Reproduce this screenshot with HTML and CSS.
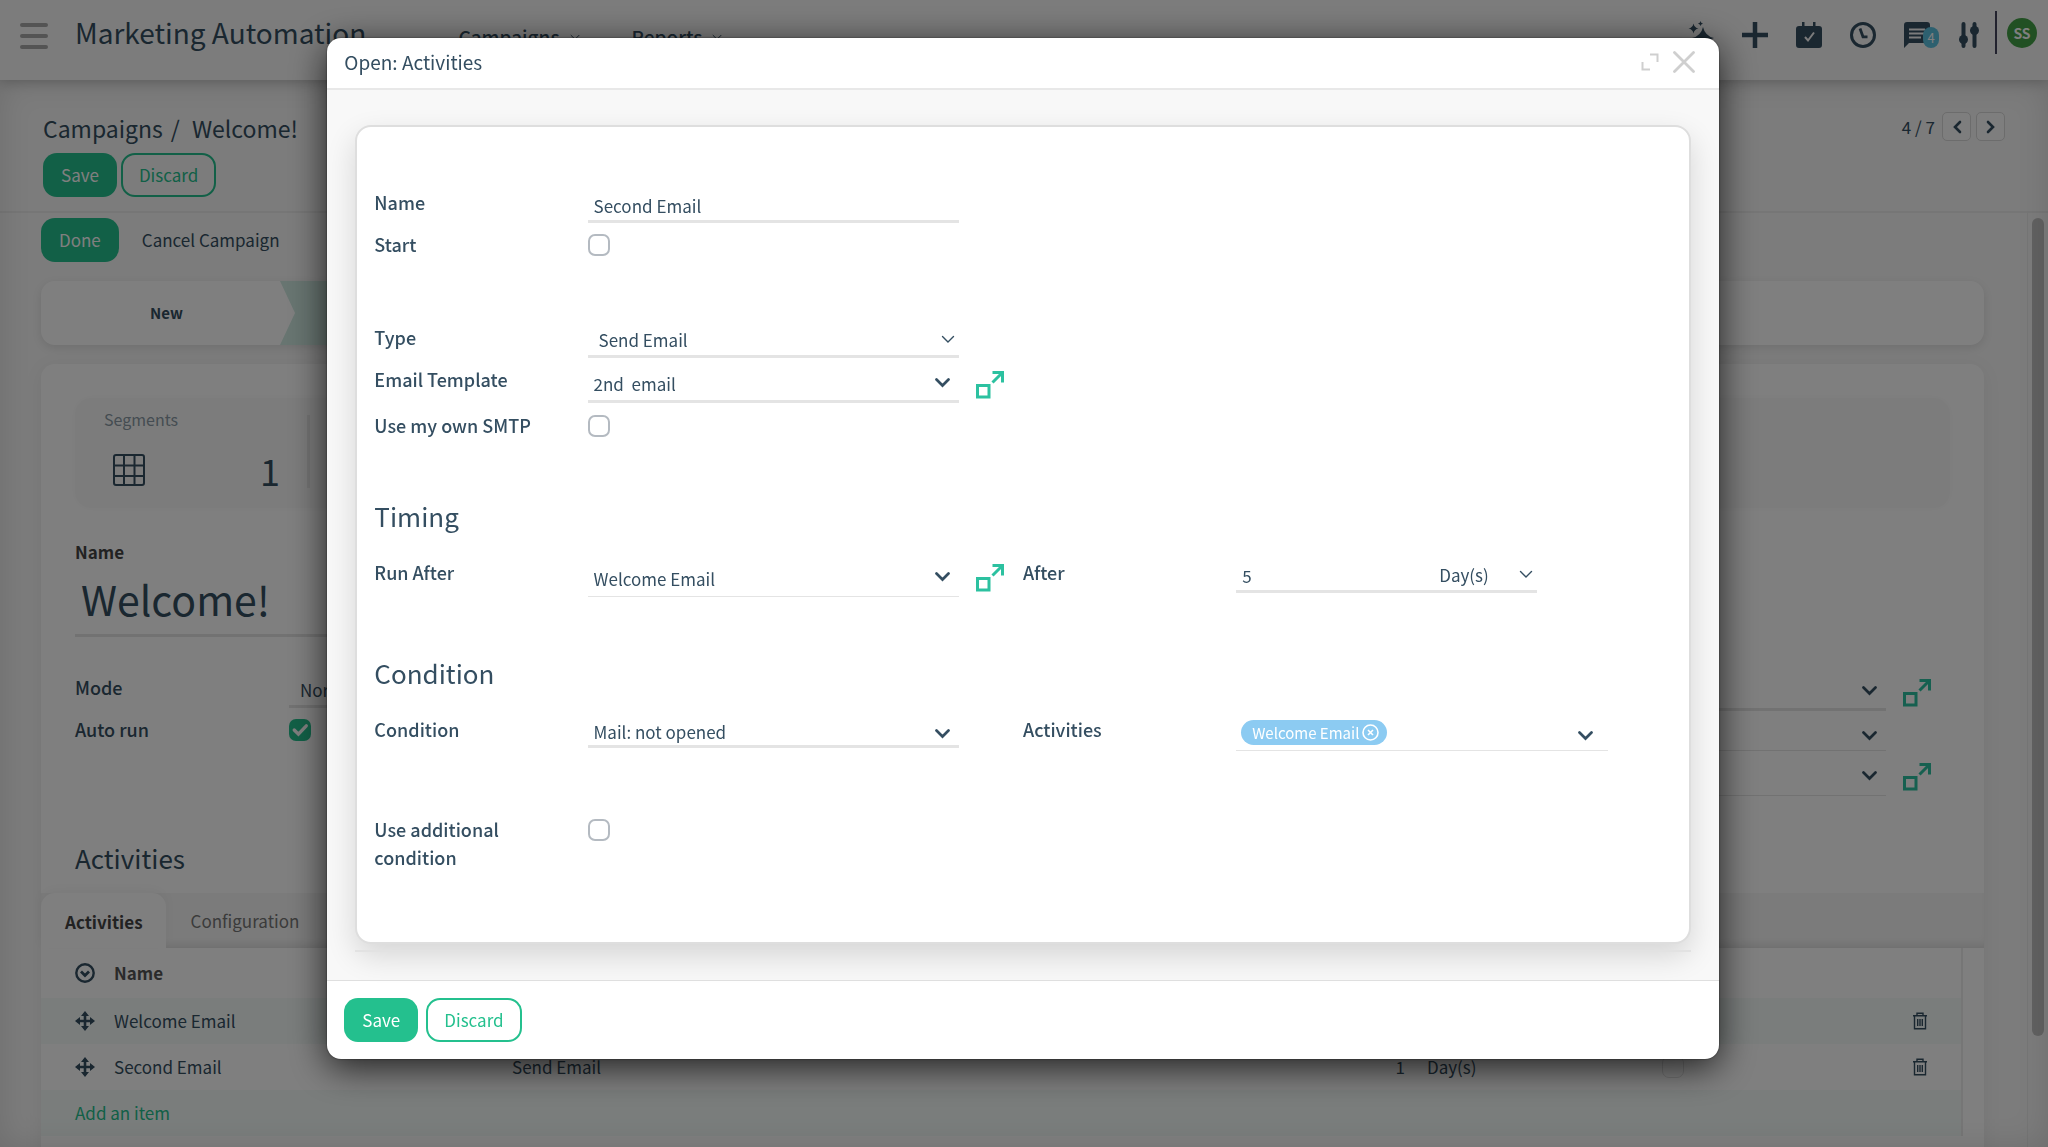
FILE: index.html
```html
<!DOCTYPE html>
<html lang="en">
<head>
<meta charset="utf-8">
<title>Marketing Automation</title>
<link rel="stylesheet" href="styles.css">
</head>
<body>
<svg class="sprite" aria-hidden="true">
  <symbol id="chev" viewBox="0 0 15 10"><path d="M1.500 1.500 7.500 7.500l6-6" fill="none" stroke="currentColor" stroke-width="2.700" stroke-linecap="round"/></symbol>
  <symbol id="chev-thin" viewBox="0 0 14 9"><path d="M1.500 1.500 7 7l5.500-5.500" fill="none" stroke="currentColor" stroke-width="1.400" stroke-linecap="round"/></symbol>
  <symbol id="open" viewBox="0 0 28 28"><path d="M1.500 14.500h11.500v11.500H1.500zM16.500 11.500 26 2M16.500 1.500h10v10" fill="none" stroke="currentColor" stroke-width="3"/></symbol>
  <symbol id="move" viewBox="0 0 20 20"><path d="M10 2v16M2 10h16" stroke="currentColor" stroke-width="2.600"/><path d="M10 0l4 5H6zM10 20l4-5H6zM0 10l5-4v8zM20 10l-5-4v8z" fill="currentColor"/></symbol>
  <symbol id="trash" viewBox="0 0 16 18"><path d="M1 3.700h14M5 3.500V1.300h6v2.200M2.500 4v12.800h11V4M5.700 7v7M8 7v7M10.300 7v7" fill="none" stroke="currentColor" stroke-width="1.400"/></symbol>
</svg>

<div class="app">
  <header class="topbar">
    <button class="burger" aria-label="Menu"><span></span><span></span><span></span></button>
    <h1 class="brand">Marketing Automation</h1>
    <nav class="menu">
      <a href="#">Campaigns <svg width="10" height="7"><use href="#chev-thin"/></svg></a>
      <a href="#">Reports <svg width="10" height="7"><use href="#chev-thin"/></svg></a>
    </nav>
    <div class="tools">
      <button aria-label="Assistant"><svg width="26" height="27" viewBox="0 0 26 27" fill="currentColor"><path d="M15 6q2 9 11 11-9 2-11 10-2-8-11-10 9-2 11-11zM5.500 2.500q.8 4.200 5 5-4.200.8-5 5-.8-4.200-5-5 4.200-.8 5-5zM12.500 0q.3 2 2.500 2.500-2.200.500-2.500 2.500-.3-2-2.500-2.500 2.200-.500 2.500-2.500z"/></svg></button>
      <button aria-label="Add"><svg width="26" height="26" viewBox="0 0 26 26"><path d="M13 0v26M0 13h26" stroke="currentColor" stroke-width="4.500"/></svg></button>
      <button aria-label="Calendar"><svg width="26" height="26" viewBox="0 0 26 26"><path d="M3 4h20a3 3 0 0 1 3 3v16a3 3 0 0 1-3 3H3a3 3 0 0 1-3-3V7a3 3 0 0 1 3-3zM6 0h2.500v6H6zM17 0h2.500v6H17z" fill="currentColor"/><path d="M9 15l3 3.500 6-8" fill="none" stroke="#f8f8f8" stroke-width="2"/></svg></button>
      <button aria-label="Activity clock"><svg width="26" height="26" viewBox="0 0 26 26" fill="none" stroke="currentColor"><circle cx="13" cy="13" r="11.500" stroke-width="3"/><path d="M10 6.500l3 8.300h4.500" stroke-width="2.800"/></svg></button>
      <button class="chat" aria-label="Messages"><svg width="26" height="26" viewBox="0 0 26 26"><path d="M3 0h20a3 3 0 0 1 3 3v15a3 3 0 0 1-3 3H5l-5 5V3a3 3 0 0 1 3-3z" fill="currentColor"/><path d="M5 7.500h16M5 11.500h16M5 15.500h12" stroke="#f8f8f8" stroke-width="1.800"/></svg><span class="badge">4</span></button>
      <button aria-label="Settings"><svg width="20" height="26" viewBox="0 0 20 26"><path d="M4.500 2v22M15.500 2v22" stroke="currentColor" stroke-width="4" stroke-linecap="round"/><circle cx="4.500" cy="17.500" r="4.500" fill="currentColor"/><circle cx="15.500" cy="8.500" r="4.500" fill="currentColor"/></svg></button>
    </div>
    <span class="rule"></span>
    <span class="avatar">SS</span>
  </header>

  <div class="page">
    <div class="control">
      <div>
        <div class="crumbs"><a href="#">Campaigns</a><span>/</span><span>Welcome!</span></div>
        <div class="actions"><button class="btn primary">Save</button><button class="btn outline">Discard</button></div>
      </div>
      <div class="pager">
        <span>4 / 7</span>
        <button aria-label="Previous"><svg width="10" height="14" viewBox="0 0 10 14"><path d="M8 2 3 7l5 5" fill="none" stroke="currentColor" stroke-width="2.600" stroke-linecap="round"/></svg></button>
        <button aria-label="Next"><svg width="10" height="14" viewBox="0 0 10 14"><path d="M2 2l5 5-5 5" fill="none" stroke="currentColor" stroke-width="2.600" stroke-linecap="round"/></svg></button>
      </div>
    </div>

    <div class="scroller">
      <main class="content">
        <div class="statusbar"><button class="btn primary">Done</button><button class="btn plain">Cancel Campaign</button></div>
        <div class="steps">
          <span class="step">New</span>
          <svg class="step-tip" width="15" height="64" viewBox="0 0 15 64"><path d="M0 0h15v64H0l15-32z" fill="currentColor"/></svg>
          <span class="step current"></span>
        </div>
        <section class="sheet">
          <div class="sheet-body">
            <div class="stats">
              <div class="stat">
                <span class="stat-name">Segments</span>
                <div class="stat-row">
                  <svg width="32" height="32" viewBox="0 0 32 32" fill="none" stroke="currentColor" stroke-width="2"><rect x="1" y="1" width="30" height="30" rx="2"/><path d="M11 1v30M21.500 1v30M1 11.500h30M1 22h30"/></svg>
                  <span class="stat-value">1</span>
                </div>
              </div>
            </div>
            <div class="title-field">
              <label for="campaign">Name</label>
              <input id="campaign" value="Welcome!">
            </div>
            <div class="columns wide">
              <div>
                <div class="row"><label for="mode">Mode</label><div class="field"><select id="mode" class="sel"><option>Normal</option></select></div></div>
                <div class="row"><label for="auto">Auto run</label><input id="auto" type="checkbox" class="check" checked></div>
              </div>
              <div>
                <div class="row"><span></span><div class="field mid"><button class="drop" aria-label="Show options"><svg width="15" height="10"><use href="#chev"/></svg></button></div><button class="ext" aria-label="Open record"><svg width="28" height="28"><use href="#open"/></svg></button></div>
                <div class="row"><span></span><div class="field thin low"><button class="drop" aria-label="Show options"><svg width="15" height="10"><use href="#chev"/></svg></button></div></div>
                <div class="row"><span></span><div class="field tall"><button class="drop" aria-label="Show options"><svg width="15" height="10"><use href="#chev"/></svg></button></div><button class="ext" aria-label="Open record"><svg width="28" height="28"><use href="#open"/></svg></button></div>
              </div>
            </div>
            <h2 class="heading">Activities</h2>
          </div>
          <div class="tabs"><a href="#" class="tab active">Activities</a><a href="#" class="tab">Configuration</a></div>
          <div class="table-wrap">
            <table class="list">
              <colgroup><col class="c-handle"><col class="c-name"><col class="c-action"><col class="c-count"><col class="c-unit"><col class="c-start"><col class="c-del"></colgroup>
              <thead><tr><th class="handle"><svg width="20" height="20" viewBox="0 0 20 20" fill="none" stroke="currentColor" stroke-width="2.400"><circle cx="10" cy="10" r="8.700"/><path d="M6 8.500l4 4 4-4" stroke-width="2.800"/></svg></th><th>Name</th><th></th><th></th><th></th><th></th><th></th></tr></thead>
              <tbody>
                <tr class="tint"><td class="handle"><svg width="20" height="20"><use href="#move"/></svg></td><td>Welcome Email</td><td></td><td></td><td></td><td></td><td class="del"><button aria-label="Delete"><svg width="16" height="18"><use href="#trash"/></svg></button></td></tr>
                <tr><td class="handle"><svg width="20" height="20"><use href="#move"/></svg></td><td>Second Email</td><td>Send Email</td><td class="num">1</td><td class="unit">Day(s)</td><td><input type="checkbox" class="check faint" aria-label="Start" disabled></td><td class="del"><button aria-label="Delete"><svg width="16" height="18"><use href="#trash"/></svg></button></td></tr>
                <tr class="tint"><td class="add" colspan="7"><a href="#">Add an item</a></td></tr>
              </tbody>
            </table>
          </div>
        </section>
      </main>
      <div class="track"><div class="thumb"></div></div>
    </div>
  </div>
</div>

<div class="overlay">
  <div class="modal" role="dialog" aria-labelledby="dlg">
    <header class="modal-head">
      <h2 id="dlg">Open: Activities</h2>
      <div class="modal-tools">
        <button aria-label="Expand"><svg width="18" height="18" viewBox="0 0 18 18"><path d="M9 1.500h7.500V9M1.500 9v7.500H9" fill="none" stroke="currentColor" stroke-width="2"/></svg></button>
        <button aria-label="Close"><svg width="22" height="22" viewBox="0 0 22 22"><path d="M1.500 1.500l19 19M20.500 1.500l-19 19" stroke="currentColor" stroke-width="2.800" stroke-linecap="round"/></svg></button>
      </div>
    </header>
    <div class="modal-body">
      <form class="card">
        <div class="columns">
          <div>
            <div class="row"><label for="name">Name</label><div class="field"><input id="name" value="Second Email"></div></div>
            <div class="row"><label for="start">Start</label><input id="start" type="checkbox" class="check"></div>
          </div>
        </div>
        <div class="columns type-group">
          <div>
            <div class="row"><label for="type">Type</label><div class="field stack"><select id="type" class="sel"><option>Send Email</option></select><svg width="14" height="9"><use href="#chev-thin"/></svg></div></div>
            <div class="row tall-row"><label for="tpl">Email Template</label><div class="field mid"><input id="tpl" value="2nd  email"><button type="button" class="drop" aria-label="Show options"><svg width="15" height="10"><use href="#chev"/></svg></button></div><button type="button" class="ext" aria-label="Open record"><svg width="28" height="28"><use href="#open"/></svg></button></div>
            <div class="row tall-row"><label for="smtp">Use my own SMTP</label><input id="smtp" type="checkbox" class="check"></div>
          </div>
        </div>
        <h3 class="heading">Timing</h3>
        <div class="columns">
          <div class="row"><label for="run">Run After</label><div class="field tall"><input id="run" value="Welcome Email"><button type="button" class="drop" aria-label="Show options"><svg width="15" height="10"><use href="#chev"/></svg></button></div><button type="button" class="ext" aria-label="Open record"><svg width="28" height="28"><use href="#open"/></svg></button></div>
          <div class="row"><label for="after">After</label><div class="field delay"><input id="after" value="5"><div class="stack"><select class="sel unit-sel" aria-label="Unit"><option>Day(s)</option></select><svg width="14" height="9"><use href="#chev-thin"/></svg></div></div></div>
        </div>
        <h3 class="heading condition-heading">Condition</h3>
        <div class="columns">
          <div class="row"><label for="cond">Condition</label><div class="field short low"><input id="cond" value="Mail: not opened"><button type="button" class="drop" aria-label="Show options"><svg width="15" height="10"><use href="#chev"/></svg></button></div></div>
          <div class="row"><label for="acts">Activities</label><div class="field thin low tags"><span class="chip">Welcome Email<button type="button" aria-label="Remove"><svg width="17" height="17" viewBox="0 0 17 17" fill="none" stroke="currentColor" stroke-width="1.600"><circle cx="8.500" cy="8.500" r="7.500"/><path d="M6 6l5 5M11 6l-5 5"/></svg></button></span><input id="acts"><button type="button" class="drop" aria-label="Show options"><svg width="15" height="10"><use href="#chev"/></svg></button></div></div>
        </div>
        <div class="columns extra-group">
          <div class="row"><label for="extra">Use additional condition</label><input id="extra" type="checkbox" class="check"></div>
        </div>
      </form>
      <hr>
    </div>
    <footer class="modal-foot"><button class="btn primary">Save</button><button class="btn outline">Discard</button></footer>
  </div>
</div>
</body>
</html>
```
FILE: styles.css
```css
:root {
  --ink: #344e61;
  --green: #24c08e;
  --line: #e4e4e4;
}
* { box-sizing: border-box; }
body {
  margin: 0;
  color: var(--ink);
  font: 400 17px/28px "Noto Sans CJK SC", "Noto Sans", sans-serif;
  background: #f8f8f8;
}
button, input, select { font: inherit; color: inherit; margin: 0; padding: 0; border: 0; background: none; outline: 0; }
a { color: inherit; text-decoration: none; }
h1, h2, h3 { margin: 0; font-weight: 400; }
svg { display: block; flex: none; }
.sprite { position: absolute; width: 0; height: 0; }

.app { height: 100vh; overflow: hidden; display: flex; flex-direction: column; }

.topbar {
  flex: none;
  display: flex;
  align-items: flex-start;
  height: 80px;
  padding: 0 11px 0 20px;
  background: #f9f9f9;
  box-shadow: 0 2px 12px rgba(0, 0, 0, .2);
  z-index: 1;
}
.burger { display: grid; gap: 7px; width: 28px; margin: 23px 27px 0 0; }
.burger span { height: 4px; border-radius: 2px; background: #a8a8a8; }
.brand { font-size: 28px; line-height: 40px; margin-top: 12px; }
.menu { display: flex; gap: 52px; margin: 23px 0 0 92px; font-weight: 500; font-size: 19px; }
.menu a { display: flex; align-items: center; gap: 10px; }
.tools { display: flex; gap: 28px; margin: 21px 16px 0 auto; }
.chat { position: relative; margin-right: 1px; }
.badge {
  position: absolute; left: 19px; top: 6px;
  width: 16px; height: 21px; border-radius: 8px;
  background: #5bc0de; color: #fff; font-size: 13px; line-height: 21px; text-align: center;
}
.rule { width: 2px; height: 43px; margin: 11px 10px 0 0; background: #44445c; }
.avatar {
  width: 30px; height: 30px; margin-top: 18px; border-radius: 50%;
  background: #43a047; color: #fff; font-size: 14px; font-weight: 700; line-height: 30px; text-align: center;
}

.page { flex: 1; min-height: 0; display: flex; flex-direction: column; position: relative; }
.page::after {
  content: ""; position: absolute; inset: 0; pointer-events: none;
  box-shadow: inset 0 0 32px rgba(0, 0, 0, .12);
}
.control {
  flex: none;
  display: flex; justify-content: space-between; align-items: flex-start;
  padding: 30px 43px 14px 43px;
  border-bottom: 2px solid #ececec;
}
.crumbs { display: flex; gap: 8px; font-size: 23px; line-height: 36px; }
.crumbs span:last-child { padding-left: 4px; }
.actions { display: flex; gap: 4px; margin-top: 7px; }
.btn { height: 44px; padding: 0 18px; border-radius: 14px; }
.primary { background: var(--green); color: #fff; }
.outline { border: 2px solid var(--green); color: var(--green); padding: 0 16px; background: #fff; }
.control .outline { background: none; }
.pager { display: flex; align-items: center; gap: 5px; margin-top: 2px; }
.pager span { margin-right: 2px; }
.pager button { width: 29px; height: 29px; display: grid; place-items: center; border: 1px solid #d8d8d8; border-radius: 5px; background: #fcfcfc; }

.scroller { flex: 1; min-height: 0; display: flex; }
.content { flex: 1; min-width: 0; padding: 5px 43px 0 41px; overflow: hidden; }
.track { flex: none; width: 21px; padding: 5px 4px 0; border-left: 1px solid #ececec; }
.thumb { height: 88%; border-radius: 6px; background: #c2c2c2; }

.statusbar { display: flex; gap: 4px; }
.plain { padding: 0 19px; }
.steps {
  display: flex; height: 64px; margin-top: 19px; border-radius: 14px; overflow: hidden;
  background: #fff; box-shadow: 0 3px 10px rgba(0, 0, 0, .1);
}
.step { width: 239px; padding-left: 12px; font-size: 15px; font-weight: 700; line-height: 64px; text-align: center; }
.step-tip { color: #d0eae2; }
.step.current { background: #d0eae2; }

.sheet { margin-top: 19px; border-radius: 14px; background: #fff; box-shadow: 0 3px 20px rgba(0, 0, 0, .06); padding-bottom: 60px; }
.sheet-body { padding: 34px 34px 16px; }
.stats { height: 110px; padding-top: 17px; border-radius: 16px; background: #f9f9f9; box-shadow: 0 0 10px #f9f9f9; }
.stat { width: 235px; height: 73px; padding: 0 27px 0 29px; border-right: 3px solid #e8e8e8; }
.stat-name { display: block; line-height: 8px; font-size: 16px; color: #8a99a5; }
.stat-row { display: flex; justify-content: space-between; align-items: center; padding: 31px 0 0 9px; }
.stat-value { font-size: 36px; line-height: 32px; font-weight: 400; }
.title-field { padding: 30px 0 0; display: grid; }
.title-field label { color: #444; font-weight: 700; line-height: 28px; }
.title-field input { width: 50%; height: 71px; padding: 0 6px 5px; font-size: 41px; border-bottom: 3px solid var(--line); }

.columns { display: grid; grid-template-columns: 1fr 1fr; }
.row { display: grid; grid-template-columns: 213fr 371fr 64fr; align-items: start; min-height: 42px; }
.wide { margin-top: 36px; }
.wide .row { grid-template-columns: 214px 1fr 64px; }
.tall-row { min-height: 46px; }
.row label { font-size: 18px; font-weight: 500; padding-right: 50px; }
.field { display: flex; align-items: center; height: 35px; border-bottom: 3px solid var(--line); }
.field input { flex: 1; min-width: 0; height: 30px; padding: 2px 6px 0; white-space: pre; }
.field.mid { height: 38px; }
.field.tall { height: 39px; border-bottom-width: 1px; }
.field.thin { height: 36px; border-bottom-width: 1px; }
.field.short { height: 33px; }
.field.delay { width: 301px; }
.drop { margin: 0 9px 0 auto; }
.tags .drop { margin-right: 15px; }
.low .drop { padding-top: 7px; }
.sel { appearance: none; width: 100%; height: 30px; padding: 2px 0 0 11px; }
.stack { display: grid; align-items: center; }
.stack > * { grid-area: 1 / 1; }
.stack > svg { justify-self: end; margin-right: 4px; pointer-events: none; }
.unit-sel { width: 109px; }
.ext { margin: 6px 0 0 17px; color: #2cc1a0; justify-self: start; }
.check {
  appearance: none; width: 22px; height: 22px; margin-top: 4px;
  border: 2px solid #b4bac1; border-radius: 7px; background: #fff;
}
.check:checked {
  border: 0;
  background: #24c08e url("data:image/svg+xml,%3Csvg xmlns='http://www.w3.org/2000/svg' viewBox='0 0 21 21'%3E%3Cpath d='M5 10.500l4 4 7.500-8' fill='none' stroke='%23fff' stroke-width='3.200' stroke-linecap='round'/%3E%3C/svg%3E");
}
.check.faint { border: 1px solid #e0e0e0; margin: 0; display: block; }
.heading { font-size: 26px; line-height: 38px; margin-bottom: 23px; }
.sheet .heading { margin: 40px 0 0; }

.tabs { display: flex; height: 55px; background: #f6f6f6; box-shadow: inset 0 -8px 10px -6px rgba(0, 0, 0, .12); }
.tab { padding: 0 25px; line-height: 55px; color: #777; }
.tab.active { padding: 1px 23px 0 24px; color: #444; font-weight: 700; background: #fff; border-radius: 14px 14px 0 0; box-shadow: 0 -4px 12px rgba(0, 0, 0, .04); }
.table-wrap { padding-right: 21px; }
.list { width: 100%; table-layout: fixed; border-collapse: collapse; border-right: 2px solid #ececec; }
.c-handle { width: 73px; }
.c-name { width: 398px; }
.c-count { width: 120px; }
.c-unit { width: 257px; }
.c-start { width: 180px; }
.c-del { width: 120px; }
.list th, .list td { padding: 0; height: 46px; text-align: left; }
.list th { height: 50px; color: #555; }
.list .handle { padding-left: 34px; color: var(--ink); }
.list .num { text-align: right; }
.list .unit { padding-left: 22px; }
.list .del { padding-left: 70px; }
.del button { display: block; }
.list .add { padding-left: 34px; color: var(--green); }
.list .tint { background: #f4fbf9; }

.overlay {
  position: fixed; inset: 0; z-index: 10;
  display: flex; justify-content: center; align-items: flex-start;
  padding: 38px 2px 0 0; background: rgba(0, 0, 0, .5);
}
.modal { width: 68%; border-radius: 14px; background: #fff; overflow: hidden; box-shadow: 0 8px 36px rgba(0, 0, 0, .75), 0 0 2px rgba(0, 0, 0, .6); }
.modal-head { display: flex; justify-content: space-between; height: 52px; padding: 0 24px 0 17px; border-bottom: 2px solid #e8e8e8; }
.modal-head h2 { font-size: 19px; line-height: 48px; }
.modal-tools { display: flex; align-items: center; gap: 14px; color: #cfcfcf; padding-bottom: 3px; }
.modal-body { padding: 35px 28px 28px; background: #f8f8f8; }
.card {
  padding: 61px 17px 71px; border: 2px solid #dedede; border-radius: 16px; background: #fff;
  box-shadow: 0 12px 30px rgba(0, 0, 0, .14);
}
.type-group { margin: 51px 0 40px; }
.condition-heading { margin-top: 54px; }
.extra-group { margin-top: 58px; }
.modal-body hr { margin: 6px 0 0; border: 0; border-top: 2px solid #e2e2e2; }
.modal-foot { display: flex; gap: 8px; padding: 17px; border-top: 1px solid #dfdfdf; }
.chip {
  display: flex; align-items: center; gap: 3px; height: 25px; margin: 0 0 0 5px; padding: 0 8px 0 11px;
  border-radius: 13px; background: #8ccbf2; color: #fff; font-size: 15px; line-height: 25px;
}
```
